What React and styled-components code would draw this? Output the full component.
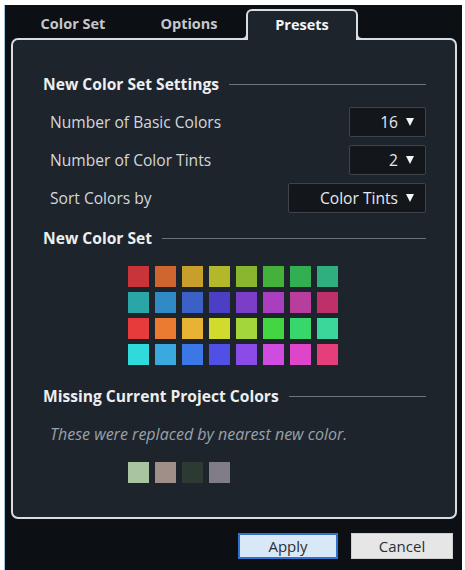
import React from "react";
import styled, { createGlobalStyle } from "styled-components";

const GlobalStyle = createGlobalStyle`
	body {
		margin: 0;
		background: #ffffff;
		font-family: "Open Sans", "Noto Sans", sans-serif;
	}
`;

const Page = styled.div`
	padding: 5px 3px 0 4px;
`;

const Window = styled.div`
	width: 458px;
	height: 565px;
	box-sizing: border-box;
	background: #0c0f13;
	border-left: 1px solid #9cc4dc;
	display: flex;
	flex-direction: column;
`;

const TabBar = styled.div`
	display: flex;
	height: 33px;
	padding: 4px 0 0 9px;
	box-sizing: border-box;
	align-items: flex-end;
`;

const Tab = styled.div`
	position: relative;
	width: ${(p) => p.$width}px;
	height: 31px;
	box-sizing: border-box;
	display: flex;
	align-items: center;
	justify-content: center;
	padding-bottom: 2px;
	font-size: 14.5px;
	font-weight: 700;
	color: ${(p) => (p.$active ? "#f2f4f6" : "#c4c8cd")};
	z-index: 2;
	margin-bottom: -2px;
	${(p) =>
		p.$active &&
		`
		background: #1e242c;
		border: 2px solid #d9dde2;
		border-bottom: none;
		border-radius: 6px 6px 0 0;
		&::before, &::after {
			content: "";
			position: absolute;
			bottom: 0;
			width: 7px;
			height: 7px;
			border-bottom: 2px solid #d9dde2;
			background: transparent;
		}
		&::before {
			left: -9px;
			border-right: 2px solid #d9dde2;
			border-bottom-right-radius: 6px;
		}
		&::after {
			right: -9px;
			border-left: 2px solid #d9dde2;
			border-bottom-left-radius: 6px;
		}
	`}
`;

const Panel = styled.div`
	margin: 0 5px 0 6px;
	height: 481px;
	box-sizing: border-box;
	background: #1e242c;
	border: 2px solid #d9dde2;
	border-radius: 7px;
	padding: 34px 29px 0 30px;
	display: flex;
	flex-direction: column;
`;

const Heading = styled.div`
	display: flex;
	align-items: center;
	gap: 10px;
	height: 20px;
	margin-top: ${(p) => p.$top || 0}px;
	font-size: 15.6px;
	font-weight: 700;
	color: #eceef0;
	white-space: nowrap;

	&::after {
		content: "";
		flex: 1;
		height: 1px;
		background: #6b727a;
	}
`;

const Rows = styled.div`
	display: flex;
	flex-direction: column;
	gap: 8px;
	margin-top: 13px;
`;

const Row = styled.div`
	display: flex;
	align-items: center;
	justify-content: space-between;
	height: 30px;
	padding-left: 7px;
	font-size: 15.6px;
	color: #d3d7dc;
`;

const Select = styled.div`
	width: ${(p) => p.$width}px;
	height: 30px;
	box-sizing: border-box;
	background: #13171c;
	border: 1px solid #3d444c;
	border-radius: 2px;
	display: flex;
	align-items: center;
	justify-content: flex-end;
	gap: 8px;
	padding-right: 11px;
	font-size: 15.6px;
	color: #e6e8eb;
`;

const Arrow = styled.span`
	width: 0;
	height: 0;
	border-left: 4px solid transparent;
	border-right: 4px solid transparent;
	border-top: 8px solid #f4f5f6;
`;

const SwatchGrid = styled.div`
	display: grid;
	grid-template-columns: repeat(${(p) => p.$cols}, 21px);
	grid-auto-rows: 21px;
	column-gap: 6px;
	row-gap: 5px;
	margin-top: ${(p) => p.$top}px;
	margin-left: 85px;
`;

const Swatch = styled.div`
	background: ${(p) => p.$color};
`;

const Note = styled.div`
	margin-top: 17px;
	padding-left: 7px;
	height: 20px;
	font-size: 16px;
	font-style: italic;
	color: #9aa1a9;
	white-space: nowrap;
`;

const ButtonRow = styled.div`
	display: flex;
	justify-content: flex-end;
	gap: 13px;
	padding: 14px 9px 0 0;
`;

const Button = styled.button`
	width: ${(p) => p.$width}px;
	height: 26px;
	box-sizing: border-box;
	font-family: "Open Sans", "Noto Sans", sans-serif;
	font-size: 15px;
	color: #2b2f33;
	background: ${(p) => (p.$primary ? "#d9e8f7" : "#e6e6e6")};
	border: ${(p) => (p.$primary ? "2px solid #2f72d0" : "1px solid #cfcfcf")};
	padding: 0;
`;

const newColors = [
	"#c9333a", "#cf6630", "#c99f2b", "#b3b72a", "#8ab62f", "#43b13c", "#31af52", "#2fae80",
	"#2aa6a6", "#2f8ac6", "#3b60c6", "#4b3fc6", "#7a3fc6", "#a93fbf", "#b83e9e", "#be306a",
	"#e63b3b", "#eb7b31", "#e8b234", "#d1db2e", "#a2d63b", "#43d642", "#37d76b", "#3bd69a",
	"#30dada", "#39a9df", "#3b78e6", "#5150e6", "#8b4be6", "#d04bdf", "#df45c8", "#e63d7b",
];

const missingColors = ["#a9c4a1", "#a08f88", "#2d3a34", "#807c88"];

const App = () => {
	return (
		<Page>
			<GlobalStyle />
			<Window>
				<TabBar>
					<Tab $width={118}>Color Set</Tab>
					<Tab $width={114}>Options</Tab>
					<Tab $width={112} $active>
						Presets
					</Tab>
				</TabBar>
				<Panel>
					<Heading>New Color Set Settings</Heading>
					<Rows>
						<Row>
							Number of Basic Colors
							<Select $width={77}>
								16 <Arrow />
							</Select>
						</Row>
						<Row>
							Number of Color Tints
							<Select $width={77}>
								2 <Arrow />
							</Select>
						</Row>
						<Row>
							Sort Colors by
							<Select $width={138}>
								Color Tints <Arrow />
							</Select>
						</Row>
					</Rows>
					<Heading $top={15}>New Color Set</Heading>
					<SwatchGrid $cols={8} $top={18}>
						{newColors.map((c, i) => (
							<Swatch key={i} $color={c} />
						))}
					</SwatchGrid>
					<Heading $top={21}>Missing Current Project Colors</Heading>
					<Note>These were replaced by nearest new color.</Note>
					<SwatchGrid $cols={4} $top={19}>
						{missingColors.map((c, i) => (
							<Swatch key={i} $color={c} />
						))}
					</SwatchGrid>
				</Panel>
				<ButtonRow>
					<Button $primary $width={100}>
						Apply
					</Button>
					<Button $width={102}>Cancel</Button>
				</ButtonRow>
			</Window>
		</Page>
	);
};

export default App;
